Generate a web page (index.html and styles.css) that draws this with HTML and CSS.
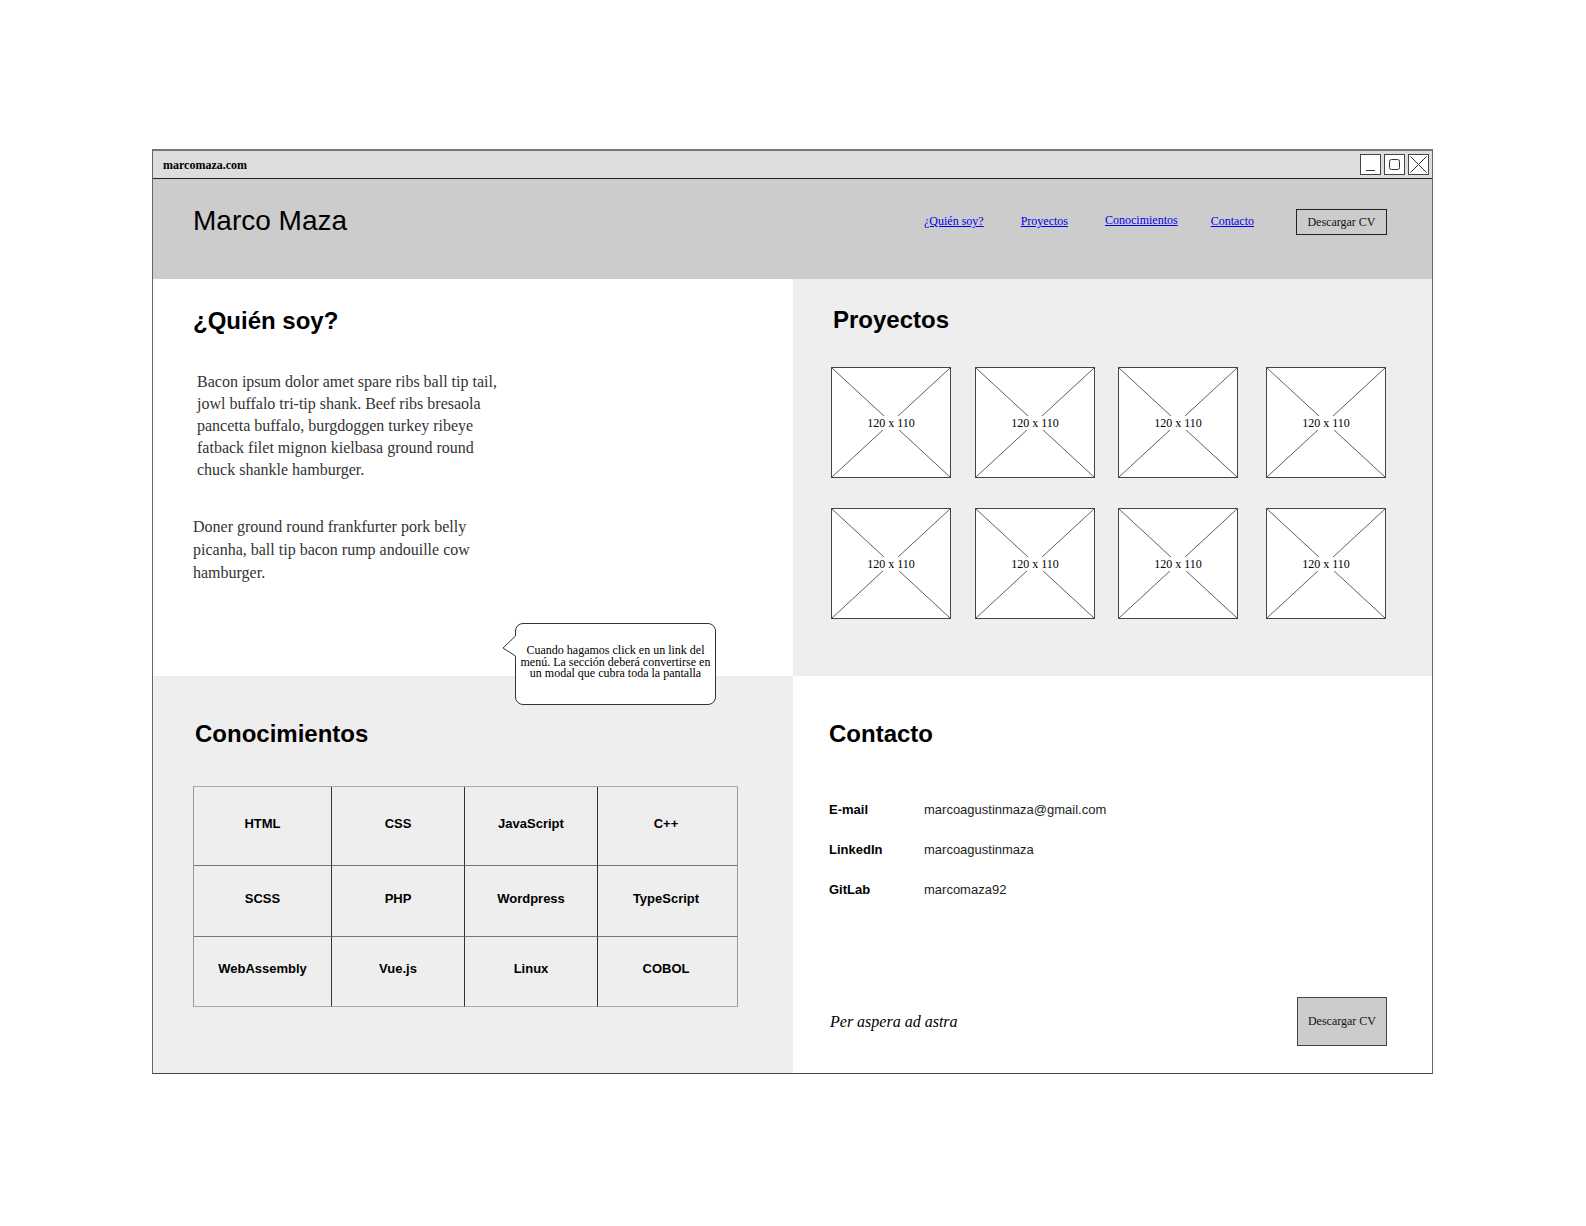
FILE: index.html
```html
<!DOCTYPE html>
<html lang="es">
<head>
<meta charset="utf-8">
<title>Marco Maza</title>
<link rel="stylesheet" href="styles.css">
</head>
<body>
<div class="window">
  <div class="titlebar">
    <span class="site">marcomaza.com</span>
    <div class="controls">
      <svg class="ctl" width="21" height="21" viewBox="0 0 21 21"><rect x="0.5" y="0.5" width="20" height="20" fill="#fff" stroke="#444"/><line x1="6" y1="16.5" x2="15" y2="16.5" stroke="#333"/></svg>
      <svg class="ctl" width="21" height="21" viewBox="0 0 21 21"><rect x="0.5" y="0.5" width="20" height="20" fill="#fff" stroke="#444"/><rect x="5.5" y="5.5" width="10" height="10" rx="2" fill="none" stroke="#333"/></svg>
      <svg class="ctl" width="21" height="21" viewBox="0 0 21 21"><rect x="0.5" y="0.5" width="20" height="20" fill="#fff" stroke="#444"/><path d="M2.5 2.5 L18.5 18.5 M18.5 2.5 L2.5 18.5" stroke="#333" fill="none"/></svg>
    </div>
  </div>

  <header class="header">
    <div class="brand">Marco Maza</div>
    <nav class="nav">
      <a class="nav-link" href="#quien">¿Quién soy?</a>
      <a class="nav-link nl-2" href="#proyectos">Proyectos</a>
      <a class="nav-link nl-3" href="#conocimientos">Conocimientos</a>
      <a class="nav-link nl-4" href="#contacto">Contacto</a>
      <button class="btn btn-header">Descargar CV</button>
    </nav>
  </header>

  <main class="content">
    <section class="sec about" id="quien">
      <h2>¿Quién soy?</h2>
      <p class="p1">Bacon ipsum dolor amet spare ribs ball tip tail, jowl buffalo tri-tip shank. Beef ribs bresaola pancetta buffalo, burgdoggen turkey ribeye fatback filet mignon kielbasa ground round chuck shankle hamburger.</p>
      <p class="p2">Doner ground round frankfurter pork belly picanha, ball tip bacon rump andouille cow hamburger.</p>
      <div class="callout">
        <svg class="callout-tail" width="14" height="24" viewBox="0 0 14 24"><polygon points="14,0.5 1,13 14,21.5" fill="#fff"/><polyline points="13.5,1 1,13 13.5,21" fill="none" stroke="#333"/></svg>
        <p class="callout-text">Cuando hagamos click en un link del<br>menú. La sección deberá convertirse en<br>un modal que cubra toda la pantalla</p>
      </div>
    </section>

    <section class="sec projects" id="proyectos">
      <h2>Proyectos</h2>
      <div class="thumbs">
        <div class="thumb"><svg viewBox="0 0 120 110" preserveAspectRatio="none"><path d="M0 0 L120 110 M120 0 L0 110" stroke="#333" stroke-width="0.8" fill="none"/></svg><span>120 x 110</span></div>
        <div class="thumb"><svg viewBox="0 0 120 110" preserveAspectRatio="none"><path d="M0 0 L120 110 M120 0 L0 110" stroke="#333" stroke-width="0.8" fill="none"/></svg><span>120 x 110</span></div>
        <div class="thumb"><svg viewBox="0 0 120 110" preserveAspectRatio="none"><path d="M0 0 L120 110 M120 0 L0 110" stroke="#333" stroke-width="0.8" fill="none"/></svg><span>120 x 110</span></div>
        <div class="thumb"><svg viewBox="0 0 120 110" preserveAspectRatio="none"><path d="M0 0 L120 110 M120 0 L0 110" stroke="#333" stroke-width="0.8" fill="none"/></svg><span>120 x 110</span></div>
        <div class="thumb"><svg viewBox="0 0 120 110" preserveAspectRatio="none"><path d="M0 0 L120 110 M120 0 L0 110" stroke="#333" stroke-width="0.8" fill="none"/></svg><span>120 x 110</span></div>
        <div class="thumb"><svg viewBox="0 0 120 110" preserveAspectRatio="none"><path d="M0 0 L120 110 M120 0 L0 110" stroke="#333" stroke-width="0.8" fill="none"/></svg><span>120 x 110</span></div>
        <div class="thumb"><svg viewBox="0 0 120 110" preserveAspectRatio="none"><path d="M0 0 L120 110 M120 0 L0 110" stroke="#333" stroke-width="0.8" fill="none"/></svg><span>120 x 110</span></div>
        <div class="thumb"><svg viewBox="0 0 120 110" preserveAspectRatio="none"><path d="M0 0 L120 110 M120 0 L0 110" stroke="#333" stroke-width="0.8" fill="none"/></svg><span>120 x 110</span></div>
      </div>
    </section>

    <section class="sec skills" id="conocimientos">
      <h2>Conocimientos</h2>
      <div class="skill-grid">
        <div class="cell">HTML</div>
        <div class="cell">CSS</div>
        <div class="cell">JavaScript</div>
        <div class="cell">C++</div>
        <div class="cell">SCSS</div>
        <div class="cell">PHP</div>
        <div class="cell">Wordpress</div>
        <div class="cell">TypeScript</div>
        <div class="cell">WebAssembly</div>
        <div class="cell">Vue.js</div>
        <div class="cell">Linux</div>
        <div class="cell">COBOL</div>
      </div>
    </section>

    <section class="sec contact" id="contacto">
      <h2>Contacto</h2>
      <dl class="contact-list">
        <dt>E-mail</dt><dd>marcoagustinmaza@gmail.com</dd>
        <dt>LinkedIn</dt><dd>marcoagustinmaza</dd>
        <dt>GitLab</dt><dd>marcomaza92</dd>
      </dl>
      <div class="contact-foot">
        <span class="motto">Per aspera ad astra</span>
        <button class="btn btn-foot">Descargar CV</button>
      </div>
    </section>
  </main>
</div>
</body>
</html>
```

FILE: styles.css
```css
* { box-sizing: border-box; }

body {
  margin: 0;
  background: #fff;
  color: #000;
  font-family: "Liberation Serif", "Times New Roman", serif;
}

.window {
  margin: 149px 0 0 152px;
  width: 1281px;
  border: 1px solid #666;
  border-top: 2px solid #777;
  border-bottom-color: #444;
}

/* title bar */
.titlebar {
  height: 28px;
  background: #ddd;
  border-bottom: 1px solid #222;
  display: flex;
  align-items: center;
  justify-content: space-between;
  padding: 0 3px 0 10px;
}
.site {
  font-weight: bold;
  font-size: 12px;
  line-height: 14px;
}
.controls {
  display: flex;
  gap: 3px;
}
.ctl { display: block; }

/* header */
.header {
  height: 100px;
  background: #ccc;
  display: flex;
  justify-content: space-between;
  align-items: flex-start;
  padding: 26px 45px 0 40px;
}
.brand {
  font-family: "Liberation Sans", Arial, sans-serif;
  font-size: 28px;
  line-height: 32px;
}
.nav {
  display: flex;
  align-items: flex-start;
}
.nav-link {
  font-size: 12px;
  line-height: 14px;
  color: #00e;
  text-decoration: underline;
  margin-top: 9px;
}
.nl-2 { margin-left: 37px; }
.nl-3 { margin-left: 37px; margin-top: 8px; }
.nl-4 { margin-left: 33px; }

.btn {
  font-family: "Liberation Serif", "Times New Roman", serif;
  font-size: 12px;
  color: #111;
  padding: 0;
  cursor: pointer;
}
.btn-header {
  margin-left: 42px;
  margin-top: 4px;
  width: 91px;
  height: 26px;
  background: #ccc;
  border: 1px solid #222;
}

/* content grid */
.content {
  display: grid;
  grid-template-columns: 640px 639px;
  grid-template-rows: 397px 397px;
}

h2 {
  margin: 0;
  font-family: "Liberation Sans", Arial, sans-serif;
  font-weight: bold;
  font-size: 24px;
  line-height: 28px;
  color: #000;
}

.about {
  background: #fff;
  padding: 28px 0 0 40px;
  position: relative;
}
.about p {
  margin: 0;
  width: 310px;
  font-size: 16px;
  color: #333;
}
.about .p1 {
  margin: 36px 0 0 4px;
  line-height: 22px;
}
.about .p2 {
  margin-top: 35px;
  line-height: 22.8px;
}

.callout {
  position: absolute;
  left: 362px;
  top: 344px;
  width: 201px;
  height: 82px;
  background: #fff;
  border: 1px solid #333;
  border-radius: 8px;
  z-index: 5;
}
.callout-tail {
  position: absolute;
  left: -14px;
  top: 11px;
}
.callout .callout-text {
  margin: 0;
  width: auto;
  padding-top: 21px;
  font-size: 12px;
  line-height: 11.5px;
  color: #000;
  text-align: center;
  white-space: nowrap;
}

.projects {
  background: #eee;
  padding: 27px 0 0 38px;
}
.projects h2 { margin-left: 2px; }
.thumbs {
  margin-top: 33px;
  display: grid;
  grid-template-columns: 144px 143px 148px 120px;
  grid-auto-rows: 111px;
  row-gap: 30px;
}
.thumb {
  position: relative;
  width: 120px;
  height: 111px;
  background: #fff;
  border: 1px solid #444;
  display: flex;
  align-items: center;
  justify-content: center;
}
.thumb svg {
  position: absolute;
  left: 0;
  top: 0;
  width: 100%;
  height: 100%;
}
.thumb span {
  position: relative;
  background: #fff;
  font-size: 12px;
  line-height: 14px;
  color: #000;
}

.skills {
  background: #eee;
  padding: 44px 0 0 40px;
}
.skills h2 { margin-left: 2px; }
.skill-grid {
  margin-top: 38px;
  display: grid;
  grid-template-columns: 138px 133px 133px 140px;
  grid-template-rows: 79px 71px 70px;
  width: 545px;
  border-top: 1px solid #aaa;
  border-left: 1px solid #999;
}
.cell {
  display: flex;
  align-items: center;
  justify-content: center;
  padding-bottom: 6px;
  border-right: 1px solid #333;
  border-bottom: 1px solid #777;
  font-family: "Liberation Sans", Arial, sans-serif;
  font-weight: bold;
  font-size: 13px;
}
.cell:nth-child(4n) { border-right-color: #999; padding-right: 3px; }
.cell:nth-child(n+9) { border-bottom-color: #aaa; }

.contact {
  background: #fff;
  padding: 44px 45px 27px 36px;
  display: flex;
  flex-direction: column;
}
.contact-list {
  margin: 54px 0 0 0;
  display: grid;
  grid-template-columns: 95px auto;
  row-gap: 25px;
  font-family: "Liberation Sans", Arial, sans-serif;
  font-size: 13px;
  line-height: 15px;
}
.contact-list dt { font-weight: bold; }
.contact-list dd { margin: 0; color: #222; }

.contact-foot {
  margin-top: auto;
  display: flex;
  justify-content: space-between;
  align-items: center;
}
.motto {
  margin-left: 1px;
  font-style: italic;
  font-size: 16px;
  line-height: 20px;
}
.btn-foot {
  width: 90px;
  height: 49px;
  background: #ccc;
  border: 1px solid #444;
}
```
